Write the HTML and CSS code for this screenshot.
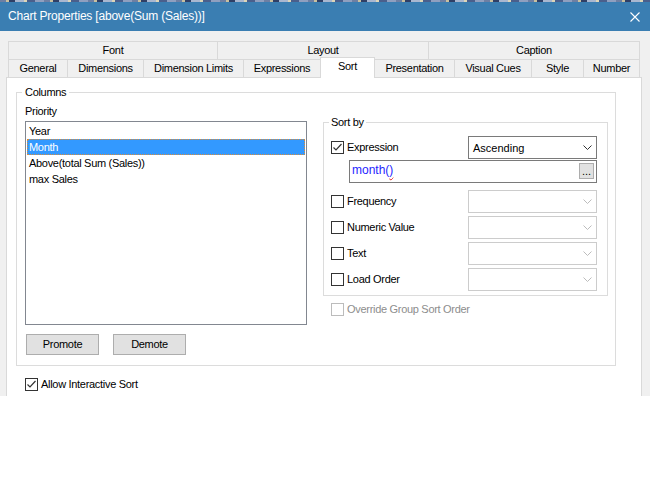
FILE: index.html
```html
<!DOCTYPE html>
<html>
<head>
<meta charset="utf-8">
<link rel="stylesheet" href="styles.css">
</head>
<body>
<div class="strip"></div>
<div class="titlebar">
  <span class="title">Chart Properties [above(Sum (Sales))]</span>
  <svg class="close" width="10" height="10" viewBox="0 0 10 10"><path d="M0.5 0.5L9.5 9.5M9.5 0.5L0.5 9.5" stroke="#fff" stroke-width="1.1" fill="none"/></svg>
</div>
<div class="dialog">
  <div class="tabs">
    <div class="tabrow back">
      <div class="tab">Font</div>
      <div class="tab">Layout</div>
      <div class="tab last">Caption</div>
    </div>
    <div class="tabrow front">
      <div class="tab">General</div>
      <div class="tab">Dimensions</div>
      <div class="tab">Dimension Limits</div>
      <div class="tab">Expressions</div>
      <div class="tab sel">Sort</div>
      <div class="tab">Presentation</div>
      <div class="tab">Visual Cues</div>
      <div class="tab">Style</div>
      <div class="tab last">Number</div>
    </div>
  </div>
  <div class="page">
    <div class="group columns">
      <div class="legend"><span>Columns</span></div>
      <div class="cols">
        <div class="leftcol">
          <div class="label">Priority</div>
          <div class="listbox">
            <div class="item">Year</div>
            <div class="item selected">Month</div>
            <div class="item">Above(total Sum (Sales))</div>
            <div class="item">max Sales</div>
          </div>
          <div class="buttons">
            <button class="btn">Promote</button>
            <button class="btn">Demote</button>
          </div>
        </div>
        <div class="rightcol">
          <div class="group sortby">
            <div class="legend"><span>Sort by</span></div>
            <div class="srow first">
              <div class="check-label">
                <span class="cb"><svg width="11" height="11" viewBox="0 0 11 11"><polyline points="1.5,5.5 4,8 9.5,2" fill="none" stroke="#333" stroke-width="1.2"/></svg></span>
                <span class="txt">Expression</span>
              </div>
              <div class="combo">
                <span>Ascending</span>
                <svg width="9" height="5" viewBox="0 0 9 5"><polyline points="0.5,0.5 4.5,4.5 8.5,0.5" fill="none" stroke="#333" stroke-width="1"/></svg>
              </div>
            </div>
            <div class="edit">
              <span class="expr">month(<span class="squig">)</span></span>
              <span class="dots">...</span>
            </div>
            <div class="srow gap">
              <div class="check-label"><span class="cb"></span><span class="txt">Frequency</span></div>
              <div class="combo disabled"><span></span><svg width="9" height="5" viewBox="0 0 9 5"><polyline points="0.5,0.5 4.5,4.5 8.5,0.5" fill="none" stroke="#bcbcbc" stroke-width="1"/></svg></div>
            </div>
            <div class="srow next">
              <div class="check-label"><span class="cb"></span><span class="txt">Numeric Value</span></div>
              <div class="combo disabled"><span></span><svg width="9" height="5" viewBox="0 0 9 5"><polyline points="0.5,0.5 4.5,4.5 8.5,0.5" fill="none" stroke="#bcbcbc" stroke-width="1"/></svg></div>
            </div>
            <div class="srow next">
              <div class="check-label"><span class="cb"></span><span class="txt">Text</span></div>
              <div class="combo disabled"><span></span><svg width="9" height="5" viewBox="0 0 9 5"><polyline points="0.5,0.5 4.5,4.5 8.5,0.5" fill="none" stroke="#bcbcbc" stroke-width="1"/></svg></div>
            </div>
            <div class="srow next">
              <div class="check-label"><span class="cb"></span><span class="txt">Load Order</span></div>
              <div class="combo disabled"><span></span><svg width="9" height="5" viewBox="0 0 9 5"><polyline points="0.5,0.5 4.5,4.5 8.5,0.5" fill="none" stroke="#bcbcbc" stroke-width="1"/></svg></div>
            </div>
          </div>
          <div class="check-label override">
            <span class="cb off"></span><span class="txt">Override Group Sort Order</span>
          </div>
        </div>
      </div>
    </div>
    <div class="check-label allow">
      <span class="cb"><svg width="11" height="11" viewBox="0 0 11 11"><polyline points="1.5,5.5 4,8 9.5,2" fill="none" stroke="#333" stroke-width="1.2"/></svg></span>
      <span class="txt">Allow Interactive Sort</span>
    </div>
  </div>
</div>
</body>
</html>
```

FILE: styles.css
```css
body {
  margin: 0;
  background: #fff;
  font-family: "Liberation Sans", Arial, sans-serif;
  font-size: 11px;
  color: #000;
}

.strip {
  height: 2px;
  background: repeating-linear-gradient(90deg, #6d7fa3 0 6px, #c8c0a0 6px 9px, #2f3f66 9px 15px, #a9b7d0 15px 24px, #ddd6b8 24px 27px, #4a5f8c 27px 35px, #8f9fbf 35px 44px);
}

.titlebar {
  height: 29px;
  background: #3a7eb2;
  color: #fff;
  display: flex;
  align-items: center;
  justify-content: space-between;
  padding: 0 10px 0 8px;
}

.title {
  font-size: 12px;
  line-height: 29px;
  letter-spacing: -0.2px;
}

.close {
  display: block;
}

.dialog {
  height: 365px;
  box-sizing: border-box;
  background: #f0f0f0;
  padding: 10px 0 0 6px;
  overflow: hidden;
}

.tabs {
  margin-left: 2px;
  width: 632px;
}

.tabrow {
  display: grid;
  height: 18px;
}

.tabrow.back {
  grid-template-columns: 209px 211px 212px;
}

.tabrow.front {
  grid-template-columns: 59px 76px 100px 77px 54px 80px 77px 52px 57px;
}

.tab {
  border-left: 1px solid #d9d9d9;
  border-top: 1px solid #d9d9d9;
  text-align: center;
  line-height: 17px;
  letter-spacing: -0.3px;
  white-space: nowrap;
  overflow: hidden;
}

.tab.last {
  border-right: 1px solid #d9d9d9;
}

.tab.sel {
  background: #fff;
  border-right: 1px solid #d9d9d9;
  margin: -2px -1px -1px 0;
  position: relative;
  z-index: 1;
}

.page {
  width: 636px;
  height: 400px;
  box-sizing: border-box;
  border: 1px solid #d9d9d9;
  background: #fff;
  padding: 14px 0 0 9px;
}

.group {
  border: 1px solid #dcdcdc;
}

.legend {
  margin-top: -7px;
  height: 13px;
  line-height: 13px;
  letter-spacing: -0.3px;
}

.legend span {
  background: #fff;
}

.columns {
  width: 600px;
  box-sizing: border-box;
  padding: 0 0 10px 8px;
}

.columns .legend span {
  margin-left: -3px;
  padding: 0 3px;
}

.cols {
  display: flex;
  gap: 16px;
}

.leftcol {
  width: 282px;
}

.label {
  margin-top: 6px;
  line-height: 13px;
  letter-spacing: -0.3px;
}

.listbox {
  margin-top: 3px;
  height: 204px;
  box-sizing: border-box;
  border: 1px solid #828790;
  padding: 1px;
  background: #fff;
}

.item {
  height: 16px;
  line-height: 16px;
  padding-left: 2px;
  letter-spacing: -0.3px;
  white-space: nowrap;
}

.item.selected {
  background: #3399ff;
  color: #fff;
  outline: 1px dotted #d98c3a;
  outline-offset: -1px;
}

.buttons {
  margin-top: 9px;
  padding-left: 1px;
  display: flex;
  gap: 14px;
}

.btn {
  width: 73px;
  height: 21px;
  box-sizing: border-box;
  border: 1px solid #adadad;
  background: #e1e1e1;
  font: inherit;
  line-height: 13px;
  letter-spacing: -0.3px;
  color: #000;
  padding: 0;
}

.rightcol {
  width: 285px;
}

.sortby {
  margin-top: 23px;
  box-sizing: border-box;
  padding: 0 10px 4px 7px;
}

.sortby .legend span {
  margin-left: -2px;
  padding: 0 2px;
}

.srow {
  display: flex;
  align-items: center;
  height: 23px;
}

.srow.first {
  margin-top: 7px;
}

.srow.gap {
  margin-top: 7px;
}

.srow.next {
  margin-top: 3px;
}

.check-label {
  display: flex;
  align-items: center;
  gap: 3px;
  line-height: 13px;
  letter-spacing: -0.3px;
  white-space: nowrap;
}

.cb {
  width: 13px;
  height: 13px;
  box-sizing: border-box;
  border: 1px solid #333;
  background: #fff;
  flex: none;
  display: flex;
}

.cb.off {
  border-color: #bcbcbc;
}

.combo {
  margin-left: auto;
  width: 129px;
  height: 23px;
  box-sizing: border-box;
  border: 1px solid #7a7a7a;
  background: #fff;
  display: flex;
  align-items: center;
  justify-content: space-between;
  padding: 0 4px;
}

.combo svg {
  display: block;
}

.combo.disabled {
  border-color: #cccccc;
}

.edit {
  margin: 1px 0 0 auto;
  width: 248px;
  height: 23px;
  box-sizing: border-box;
  border: 1px solid #7a7a7a;
  display: flex;
  align-items: flex-start;
  padding: 2px 2px 0 2px;
}

.expr {
  color: #1f1fff;
  font-size: 12px;
  line-height: 14px;
}

.squig {
  text-decoration: underline wavy #e02020 1px;
  text-underline-offset: 2px;
}

.dots {
  margin-left: auto;
  width: 15px;
  height: 16px;
  box-sizing: border-box;
  border: 1px solid #adadad;
  background: #e1e1e1;
  text-align: center;
  line-height: 14px;
  font-size: 11px;
}

.override {
  margin-top: 7px;
  padding-left: 8px;
  color: #8d8d8d;
}

.allow {
  margin-top: 12px;
  margin-left: 9px;
}
```
